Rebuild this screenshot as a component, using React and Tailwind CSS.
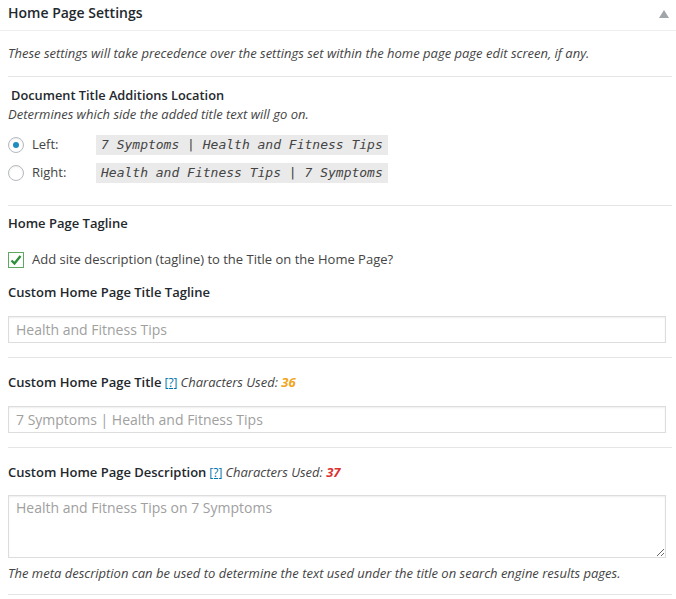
import React from "react";

const sans = { fontFamily: '"Open Sans", "Noto Sans", sans-serif' };

function Radio({ checked }) {
  return (
    <span className="w-[16px] h-[16px] rounded-full border border-[#b4b9be] bg-white shadow-[inset_0_1px_2px_rgba(0,0,0,0.07)] flex items-center justify-center shrink-0">
      {checked && <span className="w-[6px] h-[6px] rounded-full bg-[#1e8cbe]" />}
    </span>
  );
}

function Code({ children }) {
  return (
    <span
      className="bg-[#eaeaea] px-[5px] h-[20px] leading-[20px] text-[13px] italic text-[#444]"
      style={{ fontFamily: '"DejaVu Sans Mono", "Liberation Mono", monospace' }}
    >
      {children}
    </span>
  );
}

function Help() {
  return <span className="text-[#0073aa] underline text-[12px] mx-[3px] font-normal">[?]</span>;
}

export default function App() {
  return (
    <div className="w-[676px] h-[599px] bg-white text-[13px] text-[#444] overflow-hidden" style={sans}>
      <div className="h-[31px] border-b border-[#eee] flex items-start justify-between pl-[8px] pr-[7px] pt-[3px]">
        <span className="text-[14px] leading-[20px] font-semibold text-[#23282d]">Home Page Settings</span>
        <svg width="10" height="8" viewBox="0 0 10 8" className="mt-[7px]">
          <polygon points="5,0 10,8 0,8" fill="#a0a5aa" />
        </svg>
      </div>

      <div className="ml-[8px] mr-[4px]">
        <div className="pt-[12px] pb-[13px] border-b border-[#e5e5e5]">
          <p className="leading-[20px] italic">These settings will take precedence over the settings set within the home page page edit screen, if any.</p>
        </div>

        <div className="pt-[8px] pb-[18px] border-b border-[#e5e5e5]">
          <div className="pl-[3px] leading-[20px] text-[12.8px] font-semibold text-[#23282d]">Document Title Additions Location</div>
          <div className="leading-[18px] italic">Determines which side the added title text will go on.</div>
          <div className="mt-[8px] flex flex-col">
            <div className="h-[28px] flex items-center">
              <Radio checked />
              <span className="ml-[8px] w-[64px]">Left:</span>
              <Code>7 Symptoms | Health and Fitness Tips</Code>
            </div>
            <div className="h-[28px] flex items-center">
              <Radio />
              <span className="ml-[8px] w-[64px]">Right:</span>
              <Code>Health and Fitness Tips | 7 Symptoms</Code>
            </div>
          </div>
        </div>

        <div className="pt-[7px] pb-[14px] border-b border-[#e5e5e5]">
          <div className="leading-[20px] font-semibold text-[#23282d]">Home Page Tagline</div>
          <div className="mt-[17px] h-[20px] flex items-center">
            <span className="w-[16px] h-[16px] border border-[#5fa85f] bg-white flex items-center justify-center shrink-0">
              <svg width="14" height="14" viewBox="0 0 14 14">
                <path d="M2.5 7.5 L5.5 10.5 L11.5 3" stroke="#2f8f3a" strokeWidth="2.4" fill="none" />
              </svg>
            </span>
            <span className="ml-[8px]">Add site description (tagline) to the Title on the Home Page?</span>
          </div>
          <div className="mt-[12px] leading-[20px] font-semibold text-[#23282d]">Custom Home Page Title Tagline</div>
          <input
            className="mt-[14px] block w-[658px] h-[27px] border border-[#ddd] shadow-[inset_0_1px_2px_rgba(0,0,0,0.07)] px-[7px] text-[14px] placeholder:text-[#a0a0a0] outline-none"
            style={sans}
            placeholder="Health and Fitness Tips"
            readOnly
          />
        </div>

        <div className="pt-[14px] pb-[14px] border-b border-[#e5e5e5]">
          <div className="leading-[20px] font-semibold text-[#23282d]">
            Custom Home Page Title<Help /><span className="italic font-normal text-[#444]">Characters Used: </span>
            <span className="italic font-bold text-[#f0a51a]">36</span>
          </div>
          <input
            className="mt-[13px] block w-[658px] h-[27px] border border-[#ddd] shadow-[inset_0_1px_2px_rgba(0,0,0,0.07)] px-[7px] text-[14px] placeholder:text-[#a0a0a0] outline-none"
            style={sans}
            placeholder="7 Symptoms | Health and Fitness Tips"
            readOnly
          />
        </div>

        <div className="pt-[14px] pb-[11px] border-b border-[#e5e5e5]">
          <div className="leading-[20px] font-semibold text-[#23282d]">
            Custom Home Page Description<Help /><span className="italic font-normal text-[#444]">Characters Used: </span>
            <span className="italic font-bold text-[#dc3232]">37</span>
          </div>
          <textarea
            className="mt-[12px] block w-[658px] h-[63px] border border-[#ddd] shadow-[inset_0_1px_2px_rgba(0,0,0,0.07)] px-[7px] py-[2px] text-[14px] leading-[20px] placeholder:text-[#a0a0a0] outline-none"
            style={sans}
            placeholder="Health and Fitness Tips on 7 Symptoms"
            readOnly
          />
          <p className="mt-[5px] leading-[20px] italic">The meta description can be used to determine the text used under the title on search engine results pages.</p>
        </div>
      </div>
    </div>
  );
}
